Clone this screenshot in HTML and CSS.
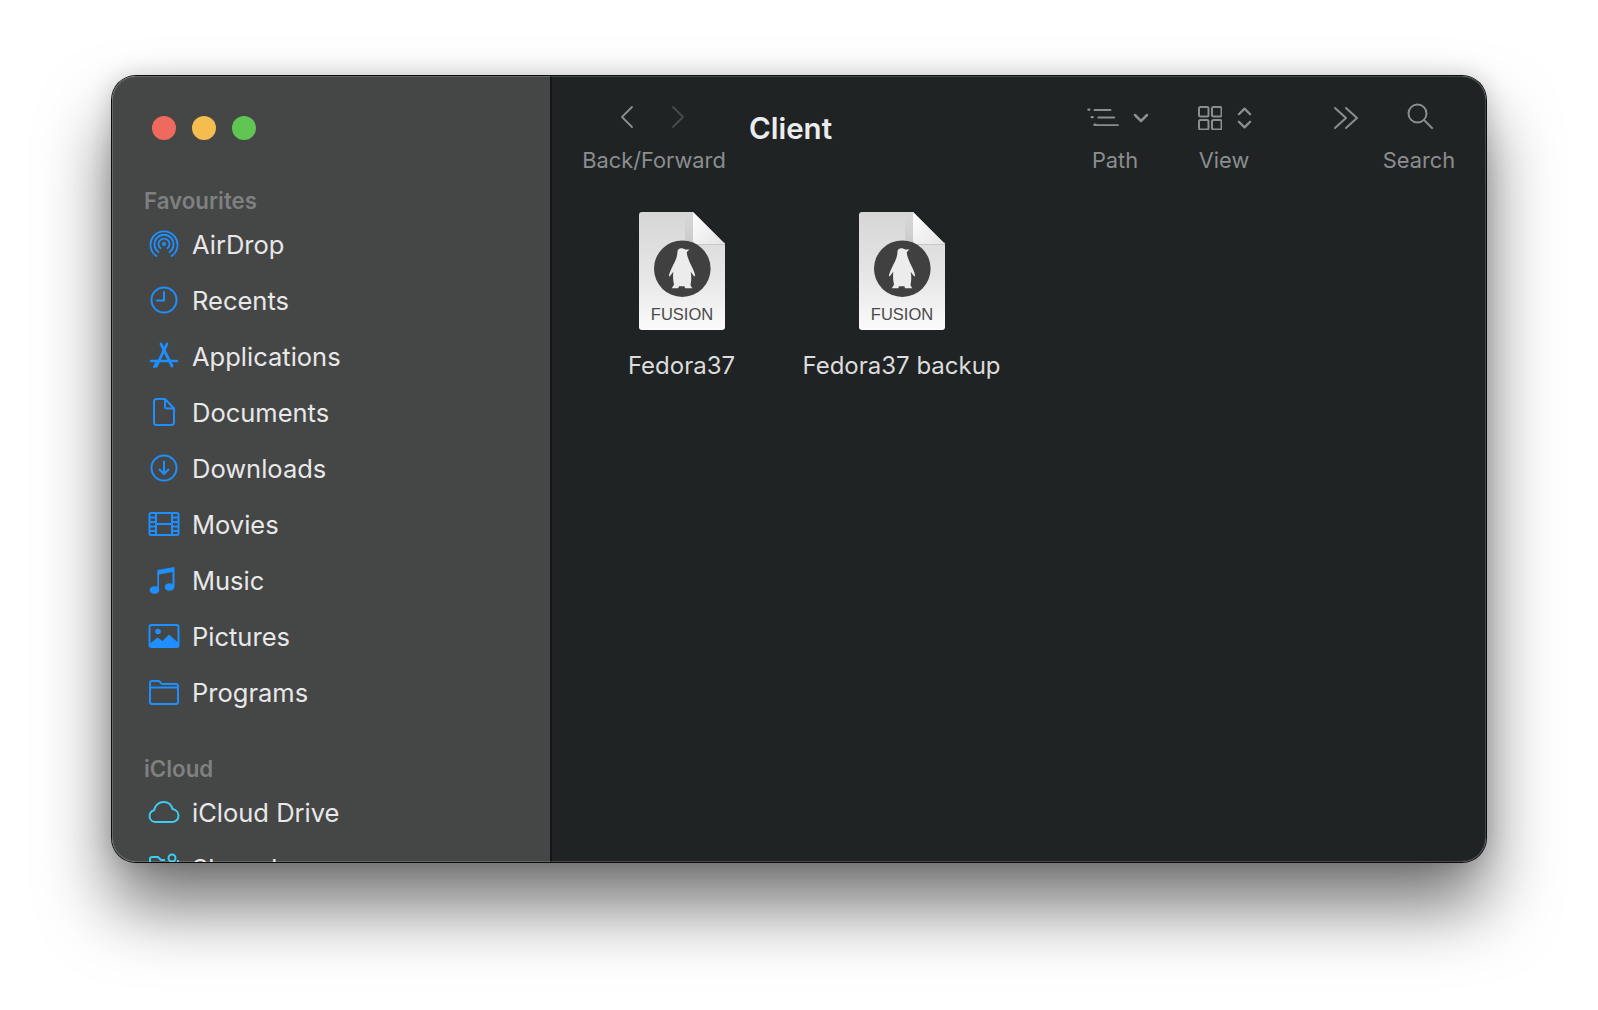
FILE: index.html
```html
<!DOCTYPE html>
<html lang="en">
<head>
  <meta charset="UTF-8">
  <title>Client</title>
  <link rel="stylesheet" href="styles.css">
</head>
<body>
  <div class="window">
    <aside class="sidebar">
      <div class="lights">
        <span class="light red"></span>
        <span class="light yellow"></span>
        <span class="light green"></span>
      </div>

      <div class="side-head first">Favourites</div>
      <div class="side-row">
        <svg class="side-icon" viewBox="0 0 32 32"><g fill="none" stroke="currentColor" stroke-width="1.800" stroke-linecap="round"><path d="M8.500 28A13.500 13.500 0 1 1 23.500 28"/><path d="M10.500 24A9.500 9.500 0 1 1 21.500 24"/><path d="M12.500 20.300A5.500 5.500 0 1 1 19.500 20.300"/></g><circle cx="16" cy="16" r="2" fill="currentColor"/></svg>
        <span>AirDrop</span>
      </div>
      <div class="side-row">
        <svg class="side-icon" viewBox="0 0 32 32"><g fill="none" stroke="currentColor" stroke-width="2" stroke-linecap="round" stroke-linejoin="round"><circle cx="16" cy="16" r="12.500"/><path d="M16 8v8.500H9"/></g></svg>
        <span>Recents</span>
      </div>
      <div class="side-row">
        <svg class="side-icon" viewBox="0 0 32 32"><g fill="none" stroke="currentColor" stroke-linecap="round"><path d="M13 4l11 22" stroke-width="2.800"/><path d="M19 4L8.500 26" stroke-width="2.800"/><path d="M3 21h26" stroke-width="2.400"/><path d="M6.500 26.500l2-3" stroke-width="3"/></g></svg>
        <span>Applications</span>
      </div>
      <div class="side-row">
        <svg class="side-icon" viewBox="0 0 32 32"><g fill="none" stroke="currentColor" stroke-width="2" stroke-linejoin="round"><path d="M6 5.500A2.500 2.500 0 0 1 8.500 3H17l9 9.500v14A2.500 2.500 0 0 1 23.500 29h-15A2.500 2.500 0 0 1 6 26.500z"/><path d="M17 3v7.500a2 2 0 0 0 2 2h7"/></g></svg>
        <span>Documents</span>
      </div>
      <div class="side-row">
        <svg class="side-icon" viewBox="0 0 32 32"><g fill="none" stroke="currentColor" stroke-width="2" stroke-linecap="round" stroke-linejoin="round"><circle cx="16" cy="16" r="12.500"/><path d="M16 9.500v12.500M11.500 17.500L16 22l4.500-4.500"/></g></svg>
        <span>Downloads</span>
      </div>
      <div class="side-row">
        <svg class="side-icon" viewBox="0 0 32 32"><g fill="none" stroke="currentColor" stroke-width="2"><rect x="1.500" y="5" width="29" height="22" rx="1.500"/><path d="M8 5v22M24 5v22M8 16h16M1.500 9.500H8M1.500 14H8M1.500 18.500H8M1.500 23H8M24 9.500h6.500M24 14h6.500M24 18.500h6.500M24 23h6.500"/></g></svg>
        <span>Movies</span>
      </div>
      <div class="side-row">
        <svg class="side-icon" viewBox="0 0 32 32"><g fill="currentColor"><ellipse cx="6.500" cy="26" rx="4.800" ry="3.800"/><ellipse cx="21.500" cy="23" rx="4.800" ry="3.800"/><path d="M9.300 26H11V10.500L24.500 8v15H26.500V3L9.300 6z"/></g></svg>
        <span>Music</span>
      </div>
      <div class="side-row">
        <svg class="side-icon" viewBox="0 0 32 32"><rect x="1.500" y="5" width="29" height="22" rx="2" fill="none" stroke="currentColor" stroke-width="2"/><circle cx="10" cy="11.500" r="2.800" fill="currentColor"/><path fill="currentColor" d="M1.500 24l8-6.500 5 3.500 6.500-6.500 9.500 8.500V25a2 2 0 0 1-2 2H3.500a2 2 0 0 1-2-2z"/></svg>
        <span>Pictures</span>
      </div>
      <div class="side-row">
        <svg class="side-icon" viewBox="0 0 32 32"><g fill="none" stroke="currentColor" stroke-width="2" stroke-linejoin="round"><path d="M2 9V7a2 2 0 0 1 2-2h7l3 3h14a2 2 0 0 1 2 2v16a2 2 0 0 1-2 2H4a2 2 0 0 1-2-2z"/><path d="M2 11.500h28"/></g></svg>
        <span>Programs</span>
      </div>

      <div class="side-head">iCloud</div>
      <div class="side-row">
        <svg class="side-icon cyan" viewBox="0 0 32 32"><path fill="none" stroke="currentColor" stroke-width="2" stroke-linejoin="round" d="M7.500 26a6 6 0 0 1-1.500-11.800C7 9 11.500 5.500 16.500 6c4 .4 7 3.200 8 7 3.500.6 6 3.400 6 6.700 0 3.500-3 6.300-6.500 6.300z"/></svg>
        <span>iCloud Drive</span>
      </div>
      <div class="side-row">
        <svg class="side-icon cyan" viewBox="0 0 32 32"><g fill="none" stroke="currentColor" stroke-width="2"><path d="M2 9V7a2 2 0 0 1 2-2h6l3 3h4M2 9v17h28V8"/><circle cx="24" cy="6" r="3.500"/></g></svg>
        <span>Shared</span>
      </div>
    </aside>

    <main class="content">
      <header class="toolbar">
        <div class="tool tool-nav">
          <div class="tool-icons nav-icons">
            <svg class="chev" viewBox="0 0 14 24"><path d="M12 2L2 12l10 10"/></svg>
            <svg class="chev off" viewBox="0 0 14 24"><path d="M2 2l10 10L2 22"/></svg>
          </div>
          <span class="tool-label">Back/Forward</span>
        </div>
        <h1 class="title">Client</h1>
        <div class="tool tool-path">
          <div class="tool-icons path-icons">
            <svg class="glyph path-list" viewBox="0 0 34 22"><path d="M8 2h17M12 10h17M8 18h25" /><path class="dots" d="M1.500 1.500h1M5 9.500h1M8 17.500h1"/></svg>
            <svg class="glyph caret" viewBox="0 0 16 10"><path d="M2 2l6 6 6-6"/></svg>
          </div>
          <span class="tool-label">Path</span>
        </div>
        <div class="tool tool-view">
          <div class="tool-icons view-icons">
            <svg class="glyph grid" viewBox="0 0 24 24"><rect x="1" y="1" width="9.500" height="9.500" rx="1.500"/><rect x="14" y="1" width="9.500" height="9.500" rx="1.500"/><rect x="1" y="14" width="9.500" height="9.500" rx="1.500"/><rect x="14" y="14" width="9.500" height="9.500" rx="1.500"/></svg>
            <svg class="glyph updown" viewBox="0 0 16 24"><path d="M2 8l6-6 6 6M2 16l6 6 6-6"/></svg>
          </div>
          <span class="tool-label">View</span>
        </div>
        <svg class="glyph more" viewBox="0 0 26 24"><path d="M2 2l11 10L2 22M13 2l11 10-11 10"/></svg>
        <div class="tool tool-search">
          <div class="tool-icons search-icons">
            <svg class="glyph lens" viewBox="0 0 26 26"><circle cx="10.500" cy="10.500" r="9"/><path d="M17 17l8 8"/></svg>
          </div>
          <span class="tool-label">Search</span>
        </div>
      </header>

      <section class="files">
        <div class="file">
          <svg class="doc" viewBox="0 0 86 118">
            <use href="#page"/>
          </svg>
          <span class="file-badge">FUSION</span>
          <span class="file-name">Fedora37</span>
        </div>
        <div class="file">
          <svg class="doc" viewBox="0 0 86 118">
            <use href="#page"/>
          </svg>
          <span class="file-badge">FUSION</span>
          <span class="file-name">Fedora37 backup</span>
        </div>
      </section>
    </main>
  </div>

  <svg class="defs" width="0" height="0">
    <defs>
      <linearGradient id="paper" x1="0" y1="0" x2="0" y2="1">
        <stop offset="0" stop-color="#d6d6d6"/>
        <stop offset="0.6" stop-color="#e8e8e8"/>
        <stop offset="1" stop-color="#fbfbfb"/>
      </linearGradient>
      <linearGradient id="fold" x1="0" y1="0" x2="1" y2="1">
        <stop offset="0" stop-color="#ffffff"/>
        <stop offset="1" stop-color="#e4e4e4"/>
      </linearGradient>
      <linearGradient id="foldShade" x1="0" y1="0" x2="0" y2="1">
        <stop offset="0" stop-color="#c0c0c0" stop-opacity="0"/>
        <stop offset="1" stop-color="#a8a8a8" stop-opacity=".8"/>
      </linearGradient>
      <g id="page">
        <path fill="url(#paper)" d="M3 0H54L86 32V115a3 3 0 0 1-3 3H3a3 3 0 0 1-3-3V3a3 3 0 0 1 3-3z"/>
        <path fill="url(#foldShade)" d="M46 0h8v30h32v3H53a7 7 0 0 1-7-7z" opacity=".55"/>
        <path fill="url(#fold)" d="M54 0L86 32H58a4 4 0 0 1-4-4z"/>
        <circle cx="43.300" cy="56.700" r="28.300" fill="#404040"/>
        <path fill="#ececec" d="M38.500 39C39 37 40.500 36.200 42 36.200C44 36.200 45.500 36.800 46 37.500L50.500 37.500L47.800 40C47.800 43 49 46 51 51C53.500 56 55.500 60 56 63C56 64.500 55.500 64.800 54.800 64L51.700 59.800C52.500 64 52.500 69 51.500 73C52 74.500 53 75.500 53.500 76.300L46 76.300L45.500 74.300L40 74.300L39.300 76.300L32.700 76.300C33.300 75.300 34.500 74 35 72.500C34 68.500 33.800 64 34.300 59.800L31 64C30.300 64.800 29.800 64.300 30 63C31 59.500 33.500 54 36 49.500C37.700 46 38.500 42.500 38.500 39Z"/>
      </g>
    </defs>
  </svg>
</body>
</html>
```

FILE: styles.css
```css
* {
  box-sizing: border-box;
}

html, body {
  height: 100%;
}

body {
  margin: 0;
  padding: 76px 0 0 112px;
  background: #ffffff;
  font-family: Inter, "Noto Sans", sans-serif;
  overflow: hidden;
}

.defs {
  display: block;
}

.window {
  display: flex;
  position: relative;
  width: 1374px;
  height: 786px;
  border-radius: 24px;
  overflow: hidden;
  box-shadow: 0 0 0 1px #0c0c0c, 0 44px 70px rgba(0, 0, 0, 0.55), 0 0 24px rgba(0, 0, 0, 0.18);
}

/* light bevel round the window */
.window::after {
  content: "";
  position: absolute;
  inset: 0;
  border-radius: 24px;
  box-shadow: inset 0 0 0 1px rgba(255, 255, 255, 0.18);
  pointer-events: none;
}

/* sidebar */
.sidebar {
  width: 440px;
  flex: none;
  padding: 0 0 0 32px;
  background: #454646;
  border-right: 2px solid #141617;
  overflow: hidden;
}

.lights {
  display: flex;
  gap: 16px;
  padding: 40px 0 0 8px;
}

.light {
  width: 24px;
  height: 24px;
  border-radius: 50%;
}

.red { background: #ee6a5f; }
.yellow { background: #f5bd4f; }
.green { background: #61c554; }

.side-head {
  height: 24px;
  margin: 37px 0 0 0;
  font-size: 22.300px;
  font-weight: 600;
  line-height: 24px;
  color: #7f8080;
}

.side-head.first {
  margin-top: 49px;
}

.side-row {
  display: flex;
  align-items: center;
  gap: 12px;
  height: 56px;
  font-size: 25.500px;
  color: #e8e8e8;
}

.side-head + .side-row {
  margin-top: 3px;
}

.side-icon {
  width: 32px;
  height: 32px;
  flex: none;
  margin-left: 4px;
  color: #1f8fff;
}

.side-icon.cyan {
  color: #3ccdf2;
}

/* toolbar */
.content {
  flex: 1;
  background: #1f2324;
}

.toolbar {
  display: flex;
  align-items: flex-start;
  height: 127px;
  padding: 26px 0 0 0;
}

.tool {
  display: flex;
  flex-direction: column;
  align-items: center;
  flex: none;
}

.tool-icons {
  display: flex;
  align-items: center;
  justify-content: center;
  height: 32px;
  gap: 14px;
}

.tool-label {
  margin-top: 12px;
  font-size: 21.800px;
  line-height: 28px;
  color: #8b8d8e;
}

.tool-nav {
  width: 146px;
  margin-left: 29px;
}

.nav-icons {
  gap: 37px;
  margin: -1px 0 1px -3px;
}

.chev {
  width: 14px;
  height: 24px;
  fill: none;
  stroke: #8b8d8e;
  stroke-width: 1.800;
  stroke-linecap: round;
  stroke-linejoin: round;
}

.chev.off {
  stroke: #484b4c;
}

.title {
  margin: 6px 0 0 22px;
  font-size: 29.500px;
  font-weight: 600;
  line-height: 40px;
  color: #ececec;
  flex: 1;
}

.glyph {
  fill: none;
  stroke: #8b8d8e;
  stroke-width: 2;
  stroke-linecap: round;
  stroke-linejoin: round;
  flex: none;
}

.path-list { width: 32px; height: 21px; }
.dots { stroke-width: 2.500; }
.caret { width: 16px; height: 10px; stroke-width: 2.500; }
.grid { width: 24px; height: 24px; }
.updown { width: 15px; height: 24px; stroke-width: 2.500; }
.more { width: 26px; height: 24px; margin: 4px 0 0 77px; }
.lens { width: 26px; height: 26px; }

.tool-path {
  width: 64px;
  margin-right: 45px;
}

.path-icons {
  margin-left: 5px;
}

.view-icons {
  gap: 15px;
  margin-left: 1px;
}

.tool-view {
  width: 64px;
}

.tool-search {
  width: 72px;
  margin: 0 31px 0 24px;
}

.search-icons {
  margin: -2px 0 2px 2px;
}

/* file grid */
.files {
  display: flex;
  padding: 9px 0 0 20px;
}

.file {
  display: flex;
  flex-direction: column;
  align-items: center;
  width: 220px;
  position: relative;
}

.doc {
  width: 86px;
  height: 118px;
  display: block;
}

.file-badge {
  position: absolute;
  top: 92px;
  left: 0;
  right: 0;
  text-align: center;
  font-family: "Liberation Sans", Arial, sans-serif;
  font-size: 16.500px;
  line-height: 20px;
  color: #4a4a4a;
}

.file-name {
  margin: 22px 1px 0 0;
  font-size: 24px;
  line-height: 28px;
  color: #dcdcdc;
  white-space: nowrap;
}
```
